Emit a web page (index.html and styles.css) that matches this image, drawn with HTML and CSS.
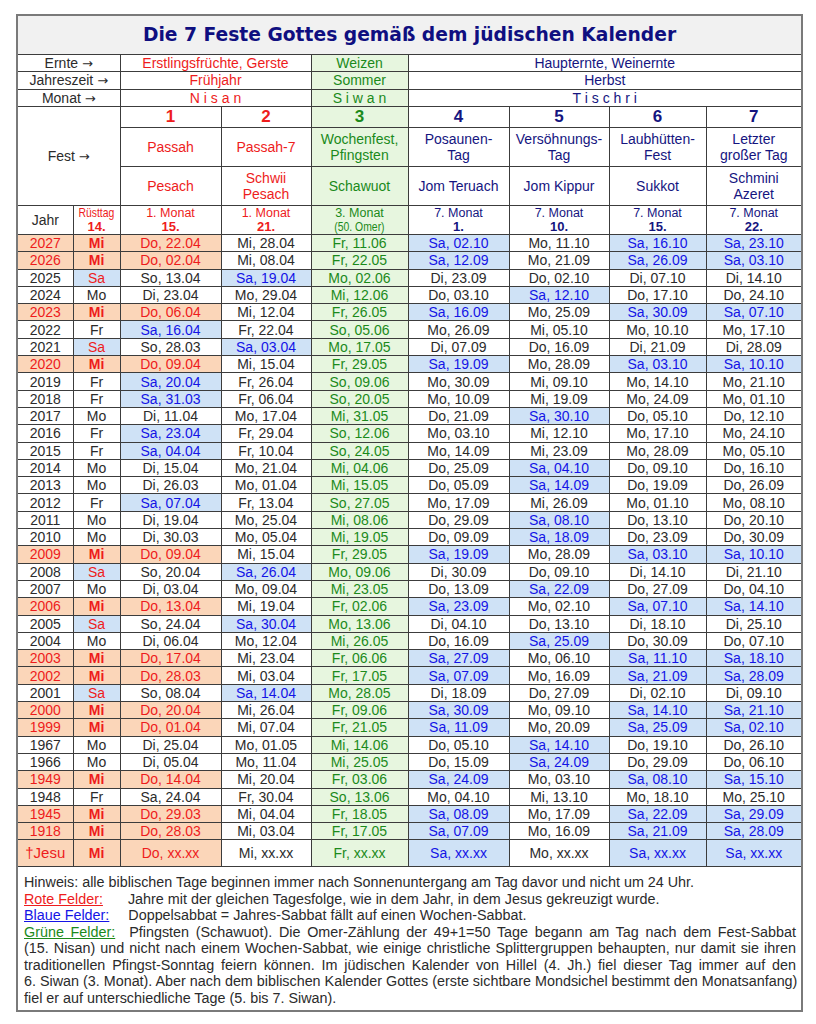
FILE: index.html
```html
<!DOCTYPE html>
<html lang="de">
<head>
<meta charset="utf-8">
<title>Die 7 Feste Gottes</title>
<link rel="stylesheet" href="styles.css">
</head>
<body>
<div class="page">
<table class="cal">
<colgroup>
<col class="w56"><col class="w47"><col class="w101"><col class="w90"><col class="w97"><col class="w101"><col class="w100"><col class="w97"><col class="w96">
</colgroup>
<thead>
<tr class="h-title"><td colspan="9" class="title">Die 7 Feste Gottes gemäß dem jüdischen Kalender</td></tr>
<tr class="h-s17"><td colspan="2">Ernte <span class="arr">→</span></td><td colspan="2" class="red">Erstlingsfrüchte, Gerste</td><td class="g">Weizen</td><td colspan="4" class="navy">Haupternte, Weinernte</td></tr>
<tr class="h-s18"><td colspan="2">Jahreszeit <span class="arr">→</span></td><td colspan="2" class="red">Frühjahr</td><td class="g">Sommer</td><td colspan="4" class="navy">Herbst</td></tr>
<tr class="h-s17"><td colspan="2">Monat <span class="arr">→</span></td><td colspan="2" class="red">N i s a n</td><td class="g">S i w a n</td><td colspan="4" class="navy">T i s c h r i</td></tr>
<tr class="h-num"><td colspan="2" rowspan="3" class="fest">Fest <span class="arr">→</span></td><td class="red">1</td><td class="red">2</td><td class="g">3</td><td class="navy">4</td><td class="navy">5</td><td class="navy">6</td><td class="navy">7</td></tr>
<tr class="h-name"><td class="red">Passah</td><td class="red">Passah-7</td><td class="g">Wochenfest,<br>Pfingsten</td><td class="navy">Posaunen-<br>Tag</td><td class="navy">Versöhnungs-<br>Tag</td><td class="navy">Laubhütten-<br>Fest</td><td class="navy">Letzter<br>großer Tag</td></tr>
<tr class="h-name"><td class="red">Pesach</td><td class="red">Schwii<br>Pesach</td><td class="g">Schawuot</td><td class="navy">Jom Teruach</td><td class="navy">Jom Kippur</td><td class="navy">Sukkot</td><td class="navy">Schmini<br>Azeret</td></tr>
<tr class="h-jahr"><td class="jahr">Jahr</td><td class="red sm"><span class="narrow">Rüsttag</span><br><b>14.</b></td><td class="red sm">1. Monat<br><b>15.</b></td><td class="red sm">1. Monat<br><b>21.</b></td><td class="g sm">3. Monat<br><span class="narrow">(50. Omer)</span></td><td class="navy sm">7. Monat<br><b>1.</b></td><td class="navy sm">7. Monat<br><b>10.</b></td><td class="navy sm">7. Monat<br><b>15.</b></td><td class="navy sm">7. Monat<br><b>22.</b></td></tr>
</thead>
<tbody>
<tr class="m"><td>2027</td><td>Mi</td><td>Do, 22.04</td><td>Mi, 28.04</td><td>Fr, 11.06</td><td class="s">Sa, 02.10</td><td>Mo, 11.10</td><td class="s">Sa, 16.10</td><td class="s">Sa, 23.10</td></tr>
<tr class="m"><td>2026</td><td>Mi</td><td>Do, 02.04</td><td>Mi, 08.04</td><td>Fr, 22.05</td><td class="s">Sa, 12.09</td><td>Mo, 21.09</td><td class="s">Sa, 26.09</td><td class="s">Sa, 03.10</td></tr>
<tr><td>2025</td><td class="k">Sa</td><td>So, 13.04</td><td class="s">Sa, 19.04</td><td>Mo, 02.06</td><td>Di, 23.09</td><td>Do, 02.10</td><td>Di, 07.10</td><td>Di, 14.10</td></tr>
<tr><td>2024</td><td>Mo</td><td>Di, 23.04</td><td>Mo, 29.04</td><td>Mi, 12.06</td><td>Do, 03.10</td><td class="s">Sa, 12.10</td><td>Do, 17.10</td><td>Do, 24.10</td></tr>
<tr class="m"><td>2023</td><td>Mi</td><td>Do, 06.04</td><td>Mi, 12.04</td><td>Fr, 26.05</td><td class="s">Sa, 16.09</td><td>Mo, 25.09</td><td class="s">Sa, 30.09</td><td class="s">Sa, 07.10</td></tr>
<tr><td>2022</td><td>Fr</td><td class="s">Sa, 16.04</td><td>Fr, 22.04</td><td>So, 05.06</td><td>Mo, 26.09</td><td>Mi, 05.10</td><td>Mo, 10.10</td><td>Mo, 17.10</td></tr>
<tr><td>2021</td><td class="k">Sa</td><td>So, 28.03</td><td class="s">Sa, 03.04</td><td>Mo, 17.05</td><td>Di, 07.09</td><td>Do, 16.09</td><td>Di, 21.09</td><td>Di, 28.09</td></tr>
<tr class="m"><td>2020</td><td>Mi</td><td>Do, 09.04</td><td>Mi, 15.04</td><td>Fr, 29.05</td><td class="s">Sa, 19.09</td><td>Mo, 28.09</td><td class="s">Sa, 03.10</td><td class="s">Sa, 10.10</td></tr>
<tr><td>2019</td><td>Fr</td><td class="s">Sa, 20.04</td><td>Fr, 26.04</td><td>So, 09.06</td><td>Mo, 30.09</td><td>Mi, 09.10</td><td>Mo, 14.10</td><td>Mo, 21.10</td></tr>
<tr><td>2018</td><td>Fr</td><td class="s">Sa, 31.03</td><td>Fr, 06.04</td><td>So, 20.05</td><td>Mo, 10.09</td><td>Mi, 19.09</td><td>Mo, 24.09</td><td>Mo, 01.10</td></tr>
<tr><td>2017</td><td>Mo</td><td>Di, 11.04</td><td>Mo, 17.04</td><td>Mi, 31.05</td><td>Do, 21.09</td><td class="s">Sa, 30.10</td><td>Do, 05.10</td><td>Do, 12.10</td></tr>
<tr><td>2016</td><td>Fr</td><td class="s">Sa, 23.04</td><td>Fr, 29.04</td><td>So, 12.06</td><td>Mo, 03.10</td><td>Mi, 12.10</td><td>Mo, 17.10</td><td>Mo, 24.10</td></tr>
<tr><td>2015</td><td>Fr</td><td class="s">Sa, 04.04</td><td>Fr, 10.04</td><td>So, 24.05</td><td>Mo, 14.09</td><td>Mi, 23.09</td><td>Mo, 28.09</td><td>Mo, 05.10</td></tr>
<tr><td>2014</td><td>Mo</td><td>Di, 15.04</td><td>Mo, 21.04</td><td>Mi, 04.06</td><td>Do, 25.09</td><td class="s">Sa, 04.10</td><td>Do, 09.10</td><td>Do, 16.10</td></tr>
<tr><td>2013</td><td>Mo</td><td>Di, 26.03</td><td>Mo, 01.04</td><td>Mi, 15.05</td><td>Do, 05.09</td><td class="s">Sa, 14.09</td><td>Do, 19.09</td><td>Do, 26.09</td></tr>
<tr><td>2012</td><td>Fr</td><td class="s">Sa, 07.04</td><td>Fr, 13.04</td><td>So, 27.05</td><td>Mo, 17.09</td><td>Mi, 26.09</td><td>Mo, 01.10</td><td>Mo, 08.10</td></tr>
<tr><td>2011</td><td>Mo</td><td>Di, 19.04</td><td>Mo, 25.04</td><td>Mi, 08.06</td><td>Do, 29.09</td><td class="s">Sa, 08.10</td><td>Do, 13.10</td><td>Do, 20.10</td></tr>
<tr><td>2010</td><td>Mo</td><td>Di, 30.03</td><td>Mo, 05.04</td><td>Mi, 19.05</td><td>Do, 09.09</td><td class="s">Sa, 18.09</td><td>Do, 23.09</td><td>Do, 30.09</td></tr>
<tr class="m"><td>2009</td><td>Mi</td><td>Do, 09.04</td><td>Mi, 15.04</td><td>Fr, 29.05</td><td class="s">Sa, 19.09</td><td>Mo, 28.09</td><td class="s">Sa, 03.10</td><td class="s">Sa, 10.10</td></tr>
<tr><td>2008</td><td class="k">Sa</td><td>So, 20.04</td><td class="s">Sa, 26.04</td><td>Mo, 09.06</td><td>Di, 30.09</td><td>Do, 09.10</td><td>Di, 14.10</td><td>Di, 21.10</td></tr>
<tr><td>2007</td><td>Mo</td><td>Di, 03.04</td><td>Mo, 09.04</td><td>Mi, 23.05</td><td>Do, 13.09</td><td class="s">Sa, 22.09</td><td>Do, 27.09</td><td>Do, 04.10</td></tr>
<tr class="m"><td>2006</td><td>Mi</td><td>Do, 13.04</td><td>Mi, 19.04</td><td>Fr, 02.06</td><td class="s">Sa, 23.09</td><td>Mo, 02.10</td><td class="s">Sa, 07.10</td><td class="s">Sa, 14.10</td></tr>
<tr><td>2005</td><td class="k">Sa</td><td>So, 24.04</td><td class="s">Sa, 30.04</td><td>Mo, 13.06</td><td>Di, 04.10</td><td>Do, 13.10</td><td>Di, 18.10</td><td>Di, 25.10</td></tr>
<tr><td>2004</td><td>Mo</td><td>Di, 06.04</td><td>Mo, 12.04</td><td>Mi, 26.05</td><td>Do, 16.09</td><td class="s">Sa, 25.09</td><td>Do, 30.09</td><td>Do, 07.10</td></tr>
<tr class="m"><td>2003</td><td>Mi</td><td>Do, 17.04</td><td>Mi, 23.04</td><td>Fr, 06.06</td><td class="s">Sa, 27.09</td><td>Mo, 06.10</td><td class="s">Sa, 11.10</td><td class="s">Sa, 18.10</td></tr>
<tr class="m"><td>2002</td><td>Mi</td><td>Do, 28.03</td><td>Mi, 03.04</td><td>Fr, 17.05</td><td class="s">Sa, 07.09</td><td>Mo, 16.09</td><td class="s">Sa, 21.09</td><td class="s">Sa, 28.09</td></tr>
<tr><td>2001</td><td class="k">Sa</td><td>So, 08.04</td><td class="s">Sa, 14.04</td><td>Mo, 28.05</td><td>Di, 18.09</td><td>Do, 27.09</td><td>Di, 02.10</td><td>Di, 09.10</td></tr>
<tr class="m"><td>2000</td><td>Mi</td><td>Do, 20.04</td><td>Mi, 26.04</td><td>Fr, 09.06</td><td class="s">Sa, 30.09</td><td>Mo, 09.10</td><td class="s">Sa, 14.10</td><td class="s">Sa, 21.10</td></tr>
<tr class="m"><td>1999</td><td>Mi</td><td>Do, 01.04</td><td>Mi, 07.04</td><td>Fr, 21.05</td><td class="s">Sa, 11.09</td><td>Mo, 20.09</td><td class="s">Sa, 25.09</td><td class="s">Sa, 02.10</td></tr>
<tr><td>1967</td><td>Mo</td><td>Di, 25.04</td><td>Mo, 01.05</td><td>Mi, 14.06</td><td>Do, 05.10</td><td class="s">Sa, 14.10</td><td>Do, 19.10</td><td>Do, 26.10</td></tr>
<tr><td>1966</td><td>Mo</td><td>Di, 05.04</td><td>Mo, 11.04</td><td>Mi, 25.05</td><td>Do, 15.09</td><td class="s">Sa, 24.09</td><td>Do, 29.09</td><td>Do, 06.10</td></tr>
<tr class="m"><td>1949</td><td>Mi</td><td>Do, 14.04</td><td>Mi, 20.04</td><td>Fr, 03.06</td><td class="s">Sa, 24.09</td><td>Mo, 03.10</td><td class="s">Sa, 08.10</td><td class="s">Sa, 15.10</td></tr>
<tr><td>1948</td><td>Fr</td><td>Sa, 24.04</td><td>Fr, 30.04</td><td>So, 13.06</td><td>Mo, 04.10</td><td>Mi, 13.10</td><td>Mo, 18.10</td><td>Mo, 25.10</td></tr>
<tr class="m"><td>1945</td><td>Mi</td><td>Do, 29.03</td><td>Mi, 04.04</td><td>Fr, 18.05</td><td class="s">Sa, 08.09</td><td>Mo, 17.09</td><td class="s">Sa, 22.09</td><td class="s">Sa, 29.09</td></tr>
<tr class="m"><td>1918</td><td>Mi</td><td>Do, 28.03</td><td>Mi, 03.04</td><td>Fr, 17.05</td><td class="s">Sa, 07.09</td><td>Mo, 16.09</td><td class="s">Sa, 21.09</td><td class="s">Sa, 28.09</td></tr>
<tr class="m jesu"><td class="jesuname">†Jesu</td><td>Mi</td><td>Do, xx.xx</td><td>Mi, xx.xx</td><td>Fr, xx.xx</td><td class="s">Sa, xx.xx</td><td>Mo, xx.xx</td><td class="s">Sa, xx.xx</td><td class="s">Sa, xx.xx</td></tr>
</tbody>
<tfoot>
<tr><td colspan="9" class="notes">
<p class="line">Hinweis: alle biblischen Tage beginnen immer nach Sonnenuntergang am Tag davor und nicht um 24 Uhr.</p>
<p class="line"><span class="lbl lred">Rote Felder:</span><span class="tab t-red"></span>Jahre mit der gleichen Tagesfolge, wie in dem Jahr, in dem Jesus gekreuzigt wurde.</p>
<p class="line"><span class="lbl lblue">Blaue Felder:</span><span class="tab t-blue"></span>Doppelsabbat = Jahres-Sabbat fällt auf einen Wochen-Sabbat.</p>
<div class="para">
<span class="jl"><span class="lbl lgreen">Grüne Felder:</span><span class="tab t-green"></span>Pfingsten (Schawuot). Die Omer-Zählung der 49+1=50 Tage begann am Tag nach dem Fest-Sabbat</span>
<span class="jl">(15. Nisan) und nicht nach einem Wochen-Sabbat, wie einige christliche Splittergruppen behaupten, nur damit sie ihren</span>
<span class="jl">traditionellen Pfingst-Sonntag feiern können. Im jüdischen Kalender von Hillel (4. Jh.) fiel dieser Tag immer auf den</span>
<span class="jl">6. Siwan (3. Monat). Aber nach dem biblischen Kalender Gottes (erste sichtbare Mondsichel bestimmt den Monatsanfang)</span>
<span class="jlast">fiel er auf unterschiedliche Tage (5. bis 7. Siwan).</span>
</div>
</td></tr>
</tfoot>
</table>
</div>
</body>
</html>
```

FILE: styles.css
```css
html, body {
  margin: 0;
  padding: 0;
  background: #ffffff;
}

body {
  font-family: "Liberation Sans", Arial, sans-serif;
  color: #2b2b2b;
}

.page {
  padding: 14px 0 0 16px;
}

.cal {
  border-collapse: collapse;
  table-layout: fixed;
  width: 786px;
  border: 2px solid #7a7a7a;
  font-size: 14px;
}

.w56 { width: 56px; }
.w47 { width: 47px; }
.w101 { width: 101px; }
.w90 { width: 90px; }
.w97 { width: 97px; }
.w100 { width: 100px; }
.w96 { width: 96px; }

.cal td {
  border: 1px solid #3c3c3c;
  padding: 0;
  text-align: center;
  vertical-align: middle;
  line-height: 16px;
  overflow: hidden;
}

/* header */
.title {
  height: 38px;
  background: #f1f1f1;
  color: #0f0f80;
  font-family: "DejaVu Sans", Verdana, sans-serif;
  font-weight: bold;
  font-size: 18.7px;
}

.arr {
  font-family: "DejaVu Sans", sans-serif;
  font-size: 13px;
}

.h-s17 td { height: 16px; line-height: 15px; }
.h-s18 td { height: 17px; line-height: 15px; }
.h-num td { height: 20px; font-weight: bold; font-size: 17px; }
.h-num td.fest { font-weight: normal; font-size: 14px; color: #2b2b2b; }
.h-name td { height: 38px; }
.h-jahr td { height: 28px; line-height: 14px; }

.sm { font-size: 12.5px; }
.sm b { font-size: 13px; }
.narrow {
  display: inline-block;
  font-size: 13px;
  transform: scaleX(0.8);
  white-space: nowrap;
  margin: 0 -10px;
}
.jahr { font-size: 14px; }

.red { color: #ee1c1c; }
.navy { color: #15157f; }
.g { color: #1b8a1b; background: #e7f6df; }

/* data rows */
.cal tbody td { height: 16.3px; line-height: 16px; }
.cal tbody td:nth-child(5) { color: #1b8a1b; background: #e7f6df; }
.cal tbody tr.m td:nth-child(1),
.cal tbody tr.m td:nth-child(2),
.cal tbody tr.m td:nth-child(3) {
  background: #fbd6b9;
  color: #ee1c1c;
}
.cal tbody tr.m td:nth-child(2) { font-weight: bold; }

.cal tbody td.s { background: #cfe2f6; color: #1414e6; }
.cal tbody td.k { background: #cfe2f6; color: #ee1c1c; }

.cal tbody tr.jesu td { height: 26px; }
.cal tbody tr.jesu td.jesuname { font-size: 15px; }

/* notes */
.cal td.notes {
  height: 136px;
  vertical-align: top;
  text-align: left;
  padding: 7px 5px 0 6px;
  line-height: 16.5px;
  font-size: 14.35px;
  color: #2b2b2b;
}

.line { margin: 0; }

.para { margin: 0; }
.jl {
  display: block;
  white-space: nowrap;
  text-align: justify;
  text-align-last: justify;
}
.jlast {
  display: block;
  white-space: nowrap;
  text-align: left;
}

.lbl { text-decoration: underline; }
.lred { color: #ee1c1c; }
.lblue { color: #1414e6; }
.lgreen { color: #1b8a1b; }
.tab { display: inline-block; height: 1px; }
.t-red { width: 25px; }
.t-blue { width: 19px; }
.t-green { width: 14px; }
```
